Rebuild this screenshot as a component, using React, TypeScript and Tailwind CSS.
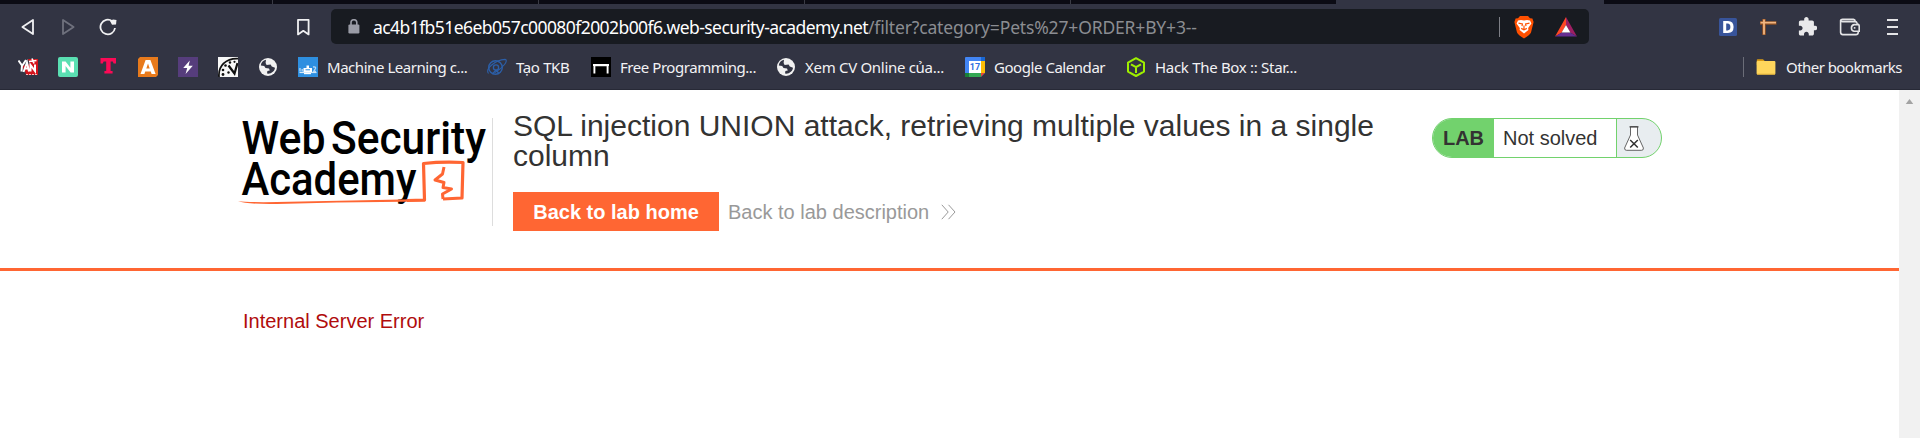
import type { ReactNode } from "react";

const UI = "font-['Noto_Sans','Open_Sans',sans-serif]";

function Back({ className, flip }: { className: string; flip?: boolean }) {
  return (
    <svg className={className} viewBox="0 0 14 18" width="14" height="18" fill="none" stroke="currentColor" strokeWidth="1.8" strokeLinejoin="round">
      <path d={flip ? "M2 2 V16 L12.6 9 Z" : "M12 2 V16 L1.4 9 Z"} />
    </svg>
  );
}

function Reload() {
  return (
    <svg viewBox="0 0 18 18" width="18" height="18" fill="none">
      <path d="M13.2 3.2 A7.3 7.3 0 1 0 16 10" stroke="#f0f0f2" strokeWidth="1.8" />
      <path d="M11 3 L14 1.5 L17.5 2 L17 6.5 L13 6.8 Z" fill="#f0f0f2" />
    </svg>
  );
}

function Globe() {
  return (
    <svg viewBox="0 0 20 20" width="20" height="20" className="shrink-0">
      <circle cx="10" cy="10" r="9" fill="#f1f1f1" />
      <path d="M8 2.8 C5 3.5 3 5.5 2.8 8.5 L6.2 9 L7.5 11 L11 11.4 L11.8 13.4 L9.4 14 L9 16.6 C13 17.4 16.8 14 17 10.8 L13.8 9.4 L12.6 7.4 L8.6 8 L7.6 6 Z" fill="#323443" />
      <path d="M9.5 5.6 L14 4.6 L13 7 L9.6 7 Z" fill="#f1f1f1" />
    </svg>
  );
}

function Bookmark({ icon, label, text }: { icon: ReactNode; label?: string; text?: string }) {
  return (
    <div className="flex h-5 shrink-0 items-center gap-[9px]">
      {icon}
      {label && <span className={`whitespace-nowrap text-[15px] leading-5 ${text}`}>{label}</span>}
    </div>
  );
}

const icons = {
  yan: (
    <svg viewBox="0 0 20 20" width="20" height="20">
      <path d="M10 2 H20 V18 L8 18 L7 14 L4 9 L12 7 Z" fill="#d3141c" />
      <path d="M0.5 3.5 L4 8.500 L3.500 14.500 M8 3 L4 9 M5.500 15 L9 5.500 L11 14.500 M7 11.500 H11 M12.500 14.500 V8 L17 14 V7.500" stroke="#fff" strokeWidth="2" fill="none" />
      <path d="M11 4.500 L18.500 3.500 M14 1.500 L16 6.500" stroke="#fff" strokeWidth="1.700" />
      <path d="M8 17.500 H19" stroke="#f1b7b9" strokeWidth="1.200" strokeDasharray="2 1" />
    </svg>
  ),
  n: (
    <svg viewBox="0 0 20 20" width="20" height="20">
      <rect width="20" height="20" rx="2" fill="#5adfb2" />
      <path d="M4 15.500 V4.500 H7.600 L12.400 10.800 V4.500 H16 V15.500 H12.600 L7.600 9 V15.500 Z" fill="#fff" />
    </svg>
  ),
  t: (
    <svg viewBox="0 0 20 20" width="20" height="20">
      <path d="M2.5 1 H18 V6.4 H15.6 L14.8 4.6 H12.6 V14 H14.6 V16.4 H6.4 V14 H8.2 V4.6 H5.6 L4.8 6.4 H2.5 Z" fill="#fb0a56" />
    </svg>
  ),
  a: (
    <svg viewBox="0 0 20 20" width="20" height="20">
      <path d="M2 0 H20 V18 L18 20 H0 V2 Z" fill="#e87a1c" />
      <path d="M2.5 17 L7.6 3 H12.4 L17.6 17 H13.6 L12.8 14.6 H7.2 L6.4 17 Z M8.3 11.6 H11.7 L10 6.6 Z" fill="#fff" fillRule="evenodd" />
    </svg>
  ),
  bolt: (
    <svg viewBox="0 0 20 20" width="20" height="20">
      <rect width="20" height="20" fill="#563d7c" />
      <path d="M11.8 3.5 L5.2 11 H9.2 L7.6 17 L14.8 8.8 H10.6 Z" fill="#fff" />
    </svg>
  ),
  clock: (
    <svg viewBox="0 0 20 20" width="20" height="20">
      <rect width="20" height="20" fill="#f8f8f8" />
      <path d="M1 20 C0 9 8 1 20 1.6" stroke="#111" strokeWidth="1.8" fill="none" />
      <path d="M10.500 8.500 L16.500 16.500 L19.500 6" stroke="#111" strokeWidth="2.200" fill="none" />
      <g fill="#111">
        <circle cx="5" cy="13" r="1.3" /><circle cx="7.500" cy="8.5" r="1.3" /><circle cx="12" cy="5.5" r="1.2" /><circle cx="16.500" cy="4.8" r="1.1" /><circle cx="5" cy="17.5" r="1.4" /><circle cx="10.500" cy="15.5" r="1.2" />
      </g>
    </svg>
  ),
  ml: (
    <svg viewBox="0 0 20 20" width="20" height="20" className="shrink-0">
      <rect width="20" height="20" fill="#2e8fe0" />
      <path d="M1.500 15.500 H18.500" stroke="#d7eafa" strokeWidth="1.200" />
      <path d="M2 14.500 V11 M4.200 14.500 V12 M15 10 Q18 9.500 17.500 11.500 L15.500 14.500 H18" stroke="#b8d9f5" strokeWidth="1.300" fill="none" />
      <path d="M5.500 11 H14 V15 H5.500 Z M8.500 8.500 H11 V11 H8.500 Z" fill="#fff" />
      <path d="M7.500 12.800 H12" stroke="#2e8fe0" strokeWidth="1" />
      <path d="M6 16.6 H13" stroke="#fff" strokeWidth="1.200" />
    </svg>
  ),
  tkb: (
    <svg viewBox="0 0 20 20" width="20" height="20" className="shrink-0" fill="none" stroke="#2c5fa8">
      <circle cx="8.500" cy="10.500" r="6.800" strokeWidth="1.400" />
      <circle cx="9" cy="10.500" r="2.600" strokeWidth="1.300" />
      <path d="M1.500 16.500 C-2 12 8 3 18 2.400 C22 3 16 11 8 15.400" strokeWidth="1.100" />
      <path d="M5.500 17 L9 13 L12 16.500" strokeWidth="1.300" />
    </svg>
  ),
  fp: (
    <svg viewBox="0 0 20 20" width="20" height="20" className="shrink-0">
      <rect width="20" height="20" fill="#000" />
      <path d="M3.4 16.4 V8.2 H16.6 V16.4 M2 8 H18" stroke="#fff" strokeWidth="1.9" fill="none" />
    </svg>
  ),
  cal: (
    <svg viewBox="0 0 20 20" width="20" height="20" className="shrink-0">
      <rect width="20" height="20" rx="1" fill="#4285f4" />
      <rect x="16" y="4" width="4" height="12" fill="#fbbc04" />
      <rect x="4" y="16" width="12" height="4" fill="#34a853" />
      <rect x="0" y="16" width="4" height="4" fill="#188038" />
      <rect x="16" y="0" width="4" height="4" fill="#1967d2" />
      <rect x="4" y="4" width="12" height="12" fill="#fff" />
      <path d="M16 16 H20 L16 20 Z" fill="#ea4335" />
      <path d="M20 16 V20 H16 Z" fill="#323443" />
      <text x="10" y="13.2" textAnchor="middle" fontSize="9" fontWeight="700" fontFamily="Roboto" fill="#2f6fe0">17</text>
    </svg>
  ),
  htb: (
    <svg viewBox="0 0 20 20" width="20" height="20" className="shrink-0" fill="none" stroke="#9fef00" strokeWidth="2" strokeLinejoin="round">
      <path d="M10 1.2 L18 5.6 V14.6 L10 19 L2 14.6 V5.6 Z M5 7.4 L10 10.2 L15 7.4 M10 10.2 V16" />
    </svg>
  ),
  folder: (
    <svg viewBox="0 0 20 20" width="20" height="20" className="shrink-0">
      <path d="M.8 3 Q.8 2.2 1.6 2.2 H7 L9 4.2 V8 H.8 Z" fill="#d99a14" />
      <rect x=".6" y="4" width="18.8" height="13.6" rx="1" fill="#ffd65c" />
      <path d="M1 17.2 H19" stroke="#e3b23a" strokeWidth="1" />
    </svg>
  ),
};

function Toolbar() {
  return (
    <div className="flex h-12 items-center pb-[3px] pl-[21px] text-[#f0f0f2]">
      <Back className="mr-[26px]" />
      <Back className="mr-6 text-[#6f717d]" flip />
      <Reload />
      <svg className="ml-[178px]" viewBox="0 0 16 18" width="16" height="18" fill="none" stroke="currentColor" strokeWidth="1.8" strokeLinejoin="round">
        <path d="M3 1.8 H13.6 V16.4 L8.3 12.8 L3 16.4 Z" />
      </svg>
      <div className="ml-5 flex h-[35px] w-[1258px] items-center rounded-[5px] bg-[#181b21] pl-[17px] pr-3">
        <svg viewBox="0 0 12 15" width="12" height="15">
          <rect x=".4" y="5.4" width="11" height="9" rx="1.2" fill="#9a9ca6" />
          <path d="M3 6 V3.6 A2.9 2.9 0 0 1 8.8 3.6 V6" fill="none" stroke="#9a9ca6" strokeWidth="1.6" />
        </svg>
        <div className="ml-[13px] whitespace-nowrap text-[17.5px] leading-[26px] tracking-[-0.16px] text-[#8b8d92]">
          <span className="tracking-[-0.57px] text-white">ac4b1fb51e6eb057c00080f2002b00f6.web-security-academy.net</span>/filter?category=Pets%27+ORDER+BY+3--
        </div>
        <div className="ml-auto h-5 w-px bg-[#7d7f86]" />
        <svg className="ml-[14px]" viewBox="0 0 20 24" width="20" height="24">
          <path d="M6 1 H14 L16 3.2 L18.4 3.6 L19.6 7 L17 17.6 Q16 20 10 23.4 Q4 20 3 17.6 L.4 7 L1.6 3.6 L4 3.2 Z" fill="#ff5000" />
          <path d="M4 5.6 L7 5 L10 5.600 L13 5 L16 5.6 L17.400 8.500 L14.200 13 L14.400 15 L10 18.6 L5.600 15 L5.800 13 L2.600 8.500 Z" fill="#fff" />
          <path d="M4.500 8.200 L8.400 9 L8 11.200 M15.500 8.200 L11.600 9 L12 11.200 M7.200 13.400 L10 14.800 L12.800 13.400 M10 10.500 V14" stroke="#ff5000" strokeWidth="1.2" fill="none" />
        </svg>
        <svg className="ml-[21px]" viewBox="0 0 22 20" width="22" height="20">
          <path d="M11 0 L0 19.4 L6.8 15.4 L11 8 Z" fill="#ff4724" />
          <path d="M11 0 L22 19.4 L15.2 15.4 L11 8 Z" fill="#9e1f63" />
          <path d="M0 19.4 H22 L15.2 15.4 H6.8 Z" fill="#662d91" />
          <path d="M11 8 L15.4 15.6 H6.6 Z" fill="#fff" />
        </svg>
      </div>
      <svg className="ml-[130px]" viewBox="0 0 18 18" width="18" height="18">
        <rect width="18" height="18" rx="1.5" fill="#38549a" />
        <path d="M4.200 3 H9 Q14.600 3.200 14.600 9 Q14.600 14.800 9 15 H4.200 Z M7.2 5.6 V12.4 H8.6 Q11.400 12.200 11.400 9 Q11.400 5.800 8.6 5.6 Z" fill="#fff" fillRule="evenodd" />
      </svg>
      <svg className="ml-[23px]" viewBox="0 0 18 18" width="18" height="18">
        <path d="M0 5 H16.500 M4 1 V17" stroke="#8f4f22" strokeWidth="3.6" />
        <path d="M.5 4.600 H16 M4 1.5 V16.5" stroke="#f2b680" strokeWidth="1.8" />
      </svg>
      <svg className="ml-5" viewBox="1 1 21.5 21.5" width="19" height="19" fill="#e9e9eb">
        <path d="M20.5 11H19V7c0-1.100-.9-2-2-2h-4V3.500C13 2.120 11.880 1 10.500 1S8 2.120 8 3.500V5H4c-1.100 0-1.990.9-1.990 2v3.800H3.500c1.490 0 2.700 1.210 2.700 2.700s-1.210 2.700-2.700 2.700H2V20c0 1.100.9 2 2 2h3.800v-1.500c0-1.490 1.210-2.700 2.700-2.700 1.490 0 2.700 1.210 2.700 2.700V22H17c1.100 0 2-.9 2-2v-4h1.500c1.380 0 2.500-1.120 2.500-2.500S21.880 11 20.500 11z" />
      </svg>
      <svg className="ml-[22px]" viewBox="0 0 22 18" width="22" height="18" fill="none" stroke="#e4e4e6" strokeWidth="1.6">
        <path d="M18 5.600 V5 Q17.800 3.600 16 3.600 H3.500 Q1.600 3.600 1.600 2.500 Q1.800 1.400 3.500 1.400 H14.500 Q16 1.400 16.400 3.600 M1.600 2.600 V14.400 Q1.800 16.600 3.800 16.600 H17 Q19 16.600 19.200 14.600 V13.400" />
        <path d="M17.500 5.800 Q20.200 6 20.200 8 V13.200 H15 A3.400 3.400 0 0 1 15 6.600 H19.800" />
        <path d="M14.800 9.900 H16.400" />
      </svg>
      <div className="ml-[26px] flex h-4 w-[11px] flex-col justify-between">
        <span className="h-0.5 bg-[#e4e4e6]" />
        <span className="h-0.5 bg-[#e4e4e6]" />
        <span className="h-0.5 bg-[#e4e4e6]" />
      </div>
    </div>
  );
}

function Logo() {
  return (
    <svg className="ml-[237px] shrink-0" viewBox="0 0 253 110" width="253" height="110">
      <g fontFamily="Roboto, sans-serif" fontWeight="500" fontSize="47" fill="#000">
        <text x="4.500" y="44" textLength="84" lengthAdjust="spacingAndGlyphs">Web</text>
        <text x="94" y="44" textLength="155" lengthAdjust="spacingAndGlyphs">Security</text>
        <text x="4.500" y="85" textLength="175" lengthAdjust="spacingAndGlyphs">Academy</text>
      </g>
      <path d="M1 91 Q10 92.500 40 92 L188 89 V91.500 L100 92.500 L40 94 Q10 94.500 1 91 Z" fill="#ff6633" />
      <path d="M170 90.500 L187.500 90 L186.500 53.500 Q205 51.500 226 52.500 L225 88 L206 89" stroke="#ff6633" strokeWidth="3.2" fill="none" strokeLinejoin="round" />
      <path d="M207 57 L205.500 64 L198 70 L207 72.500 L206 77.500 L214.500 79 L205.500 84 L206 89" stroke="#ff6633" strokeWidth="3" fill="none" strokeLinejoin="round" />
    </svg>
  );
}

export default function App() {
  return (
    <div className="flex h-[438px] w-[1920px] flex-col overflow-hidden bg-white">
      <header className={`flex h-[90px] shrink-0 flex-col border-b border-[#272936] bg-[#323443] ${UI}`}>
        <div className="flex h-1 shrink-0 bg-[#0b0b14]">
          <div className="w-[273px] border-r border-[#3a3b45]" />
          <div className="w-[266px] border-r border-[#3a3b45]" />
          <div className="w-[266px] border-r border-[#3a3b45]" />
          <div className="w-[266px] border-r border-[#3a3b45]" />
          <div className="w-[265px]" />
          <div className="w-[268px] bg-[#323443]" />
        </div>
        <Toolbar />
        <nav className="mt-[5px] flex h-5 items-center gap-5 pl-[18px] pr-4 text-[#f2f2f4]">
          <Bookmark icon={icons.yan} />
          <Bookmark icon={icons.n} />
          <Bookmark icon={icons.t} />
          <Bookmark icon={icons.a} />
          <Bookmark icon={icons.bolt} />
          <Bookmark icon={icons.clock} />
          <Bookmark icon={<Globe />} />
          <Bookmark icon={icons.ml} label="Machine Learning c..." text="w-[140px] tracking-[-0.45px]" />
          <Bookmark icon={icons.tkb} label="Tạo TKB" text="w-[55px] tracking-[-0.35px]" />
          <Bookmark icon={icons.fp} label="Free Programming..." text="w-[136px] tracking-[-0.45px]" />
          <Bookmark icon={<Globe />} label="Xem CV Online của..." text="w-[140px] tracking-[-0.3px]" />
          <Bookmark icon={icons.cal} label="Google Calendar" text="w-[112px] tracking-[-0.45px]" />
          <Bookmark icon={icons.htb} label="Hack The Box :: Star..." text="w-[142px] tracking-[-0.3px]" />
          <div className="ml-auto flex items-center gap-3">
            <div className="h-5 w-px bg-[#6b6d78]" />
            <Bookmark icon={icons.folder} label="Other bookmarks" text="w-[119px] pl-px tracking-[-0.55px]" />
          </div>
        </nav>
      </header>

      <div className="flex grow font-['Liberation_Sans',Arial,sans-serif] text-[20px] text-[#333332]">
        <main className="w-[1899px]">
          <section className="flex h-[181px] items-start border-b-[3px] border-[#ff6633] pt-5">
            <Logo />
            <div className="ml-0.5 mt-2 h-[108px] w-px shrink-0 bg-[#dddddd]" />
            <div className="ml-5 w-[880px] shrink-0">
              <h1 className="h-[82px] pt-px text-[30px] leading-[30px]">
                SQL injection UNION attack, retrieving multiple values in a single
                <br />
                column
              </h1>
              <div className="flex items-center">
                <a className="flex h-[39px] w-[206px] items-center justify-center whitespace-nowrap bg-[#ff6633] font-bold text-white">Back to lab home</a>
                <a className="ml-[9px] whitespace-nowrap text-[#999999]">Back to lab description</a>
                <svg className="ml-3" viewBox="0 0 15 16" width="15" height="16" fill="none" stroke="#999999" strokeWidth="1">
                  <path d="M.8 .8 L7.200 8 L.8 15.200 M7.500 .8 L14 8 L7.500 15.200" />
                </svg>
              </div>
            </div>
            <div className="ml-[39px] mt-2 flex h-10 w-[230px] shrink-0 overflow-hidden rounded-[20px] border border-[#72d26d] bg-[#e8edf0]">
              <div className="flex w-[61px] items-center justify-center bg-[#72d26d] font-bold">LAB</div>
              <div className="flex w-[123px] items-center whitespace-nowrap border-r border-[#72d26d] bg-white pl-[9px]">Not solved</div>
              <svg className="ml-[7px] mt-[7px]" viewBox="0 0 20 25" width="20" height="25">
                <path d="M6.500 .7 V9 L.6 22 Q.4 24.300 2.500 24.300 H17.500 Q19.700 24.300 19.400 22 L13.500 9 V.7 Z" fill="#fff" stroke="#555" strokeWidth=".9" />
                <path d="M5.500 .8 H14.500" stroke="#444" strokeWidth="1.300" />
                <path d="M6.200 14 L13.800 21.500 M13.800 14 L6.200 21.500" stroke="#333" strokeWidth="1.500" />
              </svg>
            </div>
          </section>
          <p className="pl-[243px] pt-[35px] leading-[30px] text-[#b00c0c]">Internal Server Error</p>
        </main>
        <aside className="flex w-[21px] justify-center bg-[#f1f1f1] pt-[9px]">
          <svg viewBox="0 0 9 6" width="9" height="5">
            <path d="M0 6 L4.500 0 L9 6 Z" fill="#a3a3a3" />
          </svg>
        </aside>
      </div>
    </div>
  );
}
